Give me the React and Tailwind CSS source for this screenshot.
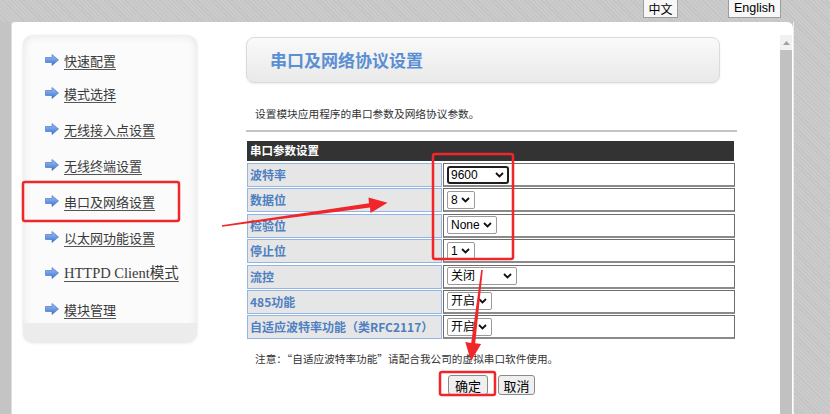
import React from "react";

const CJK = '"Noto Sans CJK SC", "Noto Sans", sans-serif';
const LAT = '"Liberation Sans", "Noto Sans CJK SC", sans-serif';

function MenuArrow() {
  return (
    <svg width="14" height="12" viewBox="0 0 14 12" className="shrink-0">
      <defs>
        <linearGradient id="ma" x1="0" y1="0" x2="0" y2="1">
          <stop offset="0" stopColor="#9cc2f5" />
          <stop offset="1" stopColor="#3f74d2" />
        </linearGradient>
      </defs>
      <polygon points="0.5,3.5 7,3.5 7,0.5 13.5,6 7,11.5 7,8.5 0.5,8.5" fill="url(#ma)" stroke="#3c6cc4" strokeWidth="0.6" />
    </svg>
  );
}

function Chevron() {
  return (
    <svg width="9" height="6" viewBox="0 0 9 6" className="shrink-0">
      <path d="M1 1 L4.5 4.5 L8 1" fill="none" stroke="#111" strokeWidth="1.8" />
    </svg>
  );
}

function Sel({ text, className, focused }) {
  return (
    <div
      className={
        "h-[18px] flex items-center justify-between bg-white text-[12px] text-black " +
        (focused ? "border-2 border-[#1e1e1e] rounded-[3px] pl-[2px] pr-[3px] " : "border border-[#9a9a9a] rounded-[2px] pl-[3px] pr-[4px] ") +
        className
      }
      style={{ fontFamily: LAT }}
    >
      <span className="leading-none whitespace-nowrap">{text}</span>
      <Chevron />
    </div>
  );
}

const menu = [
  "快速配置",
  "模式选择",
  "无线接入点设置",
  "无线终端设置",
  "串口及网络设置",
  "以太网功能设置",
  "HTTPD Client模式",
  "模块管理",
];

const rows = [
  ["波特率", <Sel text="9600" focused className="w-[62px]" />],
  ["数据位", <Sel text="8" className="w-[28px]" />],
  ["检验位", <Sel text="None" className="w-[50px]" />],
  ["停止位", <Sel text="1" className="w-[28px]" />],
  ["流控", <Sel text="关闭" className="w-[70px]" />],
  ["485功能", <Sel text="开启" className="w-[45px]" />],
  ["自适应波特率功能（类RFC2117）", <Sel text="开启" className="w-[45px]" />],
];

export default function App() {
  return (
    <div
      className="w-[830px] h-[414px] overflow-hidden relative flex flex-col bg-[repeating-linear-gradient(45deg,#c3c3c3_0px,#c3c3c3_1px,#cbcbcb_1px,#cbcbcb_3px)]"
      style={{ fontFamily: CJK }}
    >
      {/* top bar */}
      <div className="h-[22px] flex justify-end items-start pr-[49px] gap-[50px] shrink-0">
        <div className="w-[35px] h-[18px] bg-[#f7f7f7] border border-[#9d9d9d] border-t-0 flex items-center justify-center text-[12px] text-black">
          中文
        </div>
        <div
          className="w-[53px] h-[18px] bg-[#f7f7f7] border border-[#9d9d9d] border-t-0 flex items-center justify-center text-[12.5px] text-black"
          style={{ fontFamily: LAT }}
        >
          English
        </div>
      </div>

      <div className="flex flex-1 min-h-0">
        <div className="w-[12px] bg-[#c4c4c4] border-r border-[#dedede] shrink-0" />
        <div className="w-[781px] shrink-0 bg-white rounded-tr-[6px] rounded-tl-[3px] flex">
          <div className="flex-1 flex pt-[13px] pl-[11px]">
            {/* sidebar */}
            <div className="w-[174px] h-[307px] rounded-[10px] bg-[#fbfbfb] shadow-[inset_0_0_10px_rgba(0,0,0,0.10),0_1px_3px_rgba(0,0,0,0.12)] flex flex-col overflow-hidden shrink-0">
              <div className="flex flex-col pt-[17px] gap-[20px] pl-[22px]">
                {menu.map((m, i) => (
                  <div
                    key={m}
                    className={"h-[16px] flex items-center gap-[5px] " + (i === 0 ? "mb-[-3px]" : "")}
                  >
                    <MenuArrow />
                    <span
                      className="text-[13px] text-[#3a3a3a] underline underline-offset-[3px] decoration-[#555] whitespace-nowrap leading-none"
                      style={i === 6 ? { fontFamily: '"Liberation Serif", "Noto Sans CJK SC", serif', fontSize: "14.5px" } : undefined}
                    >
                      {m}
                    </span>
                  </div>
                ))}
              </div>
              <div className="mt-auto h-[19px] bg-[#ececec]" />
            </div>

            {/* main */}
            <div className="ml-[49px] w-[491px] flex flex-col shrink-0">
              <div className="mt-[2px] w-[474px] h-[46px] rounded-[8px] border border-[#dadada] bg-gradient-to-b from-[#fafafa] to-[#e9e9e9] shadow-[0_1px_2px_rgba(0,0,0,0.08)] flex items-center pl-[23px]">
                <span className="text-[17px] font-bold text-[#5b8fd3]">串口及网络协议设置</span>
              </div>
              <div className="mt-[23px] h-[16px] pl-[9px] flex items-center text-[10.7px] text-[#333]">
                设置模块应用程序的串口参数及网络协议参数。
              </div>
              <div className="mt-[8px] h-[2px] bg-[#c4c4c4]" />

              {/* table */}
              <div className="mt-[9px] pl-[1px] w-[489px] flex flex-col">
                <div className="h-[20px] bg-[#333333] flex items-center pl-[3px] text-[11.5px] font-bold text-white w-[487px]">
                  串口参数设置
                </div>
                <div className="mt-[2px] flex flex-col gap-[1.4px]">
                  {rows.map(([label, ctrl]) => (
                    <div key={label} className="h-[24px] flex gap-[1px]">
                      <div className="w-[195px] h-full bg-[#e6e6e6] border border-[#93b5e3] flex items-center pl-[2px] text-[12px] font-bold text-[#4d7fc2] whitespace-nowrap">
                        {label}
                      </div>
                      <div className="w-[292px] h-full border border-[#6d6d6d] border-b-2 border-b-[#8a8a8a] bg-white flex items-center pl-[3px]">
                        {ctrl}
                      </div>
                    </div>
                  ))}
                </div>
              </div>

              <div className="mt-[12px] h-[16px] pl-[9px] flex items-center text-[10.65px] text-[#333] whitespace-nowrap">
                注意：“自适应波特率功能”请配合我公司的虚拟串口软件使用。
              </div>
              <div className="mt-[8px] flex justify-center gap-[10px]">
                <div className="w-[40px] h-[20px] bg-[#efefef] border border-[#8a8a8a] rounded-[3px] flex items-center justify-center text-[13px] text-black">
                  确定
                </div>
                <div className="w-[37px] h-[20px] bg-[#efefef] border border-[#8a8a8a] rounded-[3px] flex items-center justify-center text-[13px] text-black">
                  取消
                </div>
              </div>
            </div>
          </div>

          {/* scrollbar */}
          <div className="w-[12px] mt-[13px] mr-[1px] flex flex-col shrink-0">
            <div className="h-[15px] bg-[#f1f1f1] flex items-center justify-center">
              <svg width="7" height="4" viewBox="0 0 7 4">
                <polygon points="0,4 3.5,0 7,4" fill="#a3a3a3" />
              </svg>
            </div>
            <div className="flex-1 bg-[#c1c1c1]" />
          </div>
        </div>
        <div className="w-[1px] bg-[#ececec] shrink-0" />
      </div>

      {/* annotations overlay */}
      <svg className="absolute inset-0 pointer-events-none" width="830" height="414" viewBox="0 0 830 414">
        <rect x="23" y="182" width="156" height="39" rx="2" fill="none" stroke="#f0262a" strokeWidth="2.5" />
        <rect x="433" y="154" width="80" height="105" rx="2" fill="none" stroke="#f0262a" strokeWidth="2.5" />
        <rect x="440" y="372" width="55" height="23" rx="2" fill="none" stroke="#f0262a" strokeWidth="2.5" />
        <polygon
          points="221.9,225.2 369,203.3 368.5,197.5 387.5,202.8 370.5,213 370,207.4 222.1,226.8"
          fill="#f0262a"
        />
        <polygon
          points="481.2,269.9 471.2,342.9 465.3,342.1 471,361 481.1,344.1 475.2,343.3 482.8,270.1"
          fill="#f0262a"
        />
      </svg>
    </div>
  );
}
